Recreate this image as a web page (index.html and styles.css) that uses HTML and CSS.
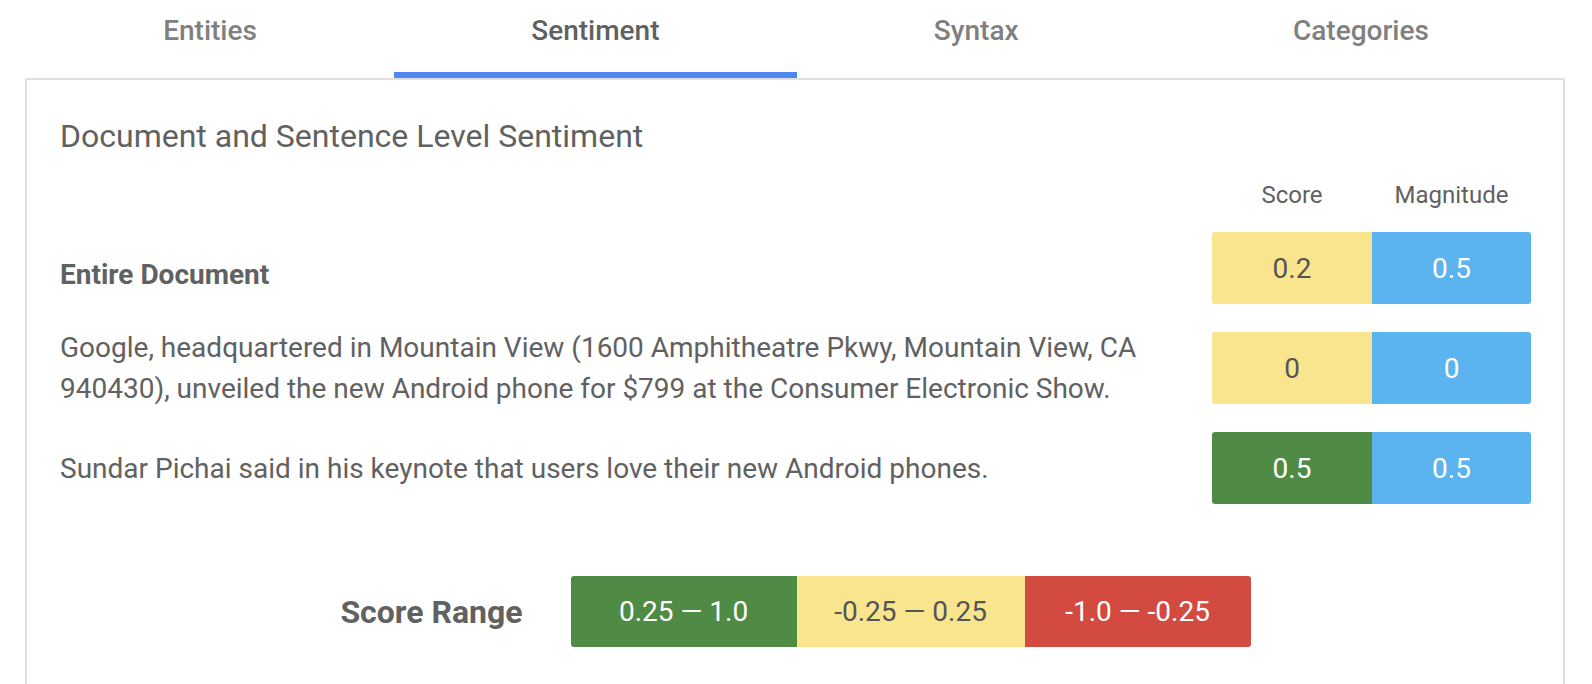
FILE: index.html
```html
<!DOCTYPE html>
<html>
<head>
<meta charset="utf-8">
<link rel="stylesheet" href="styles.css">
</head>
<body>
<div class="page">
  <nav class="tabs">
    <div class="tab">Entities</div>
    <div class="tab active">Sentiment</div>
    <div class="tab">Syntax</div>
    <div class="tab">Categories</div>
  </nav>
  <section class="panel">
    <h2 class="title">Document and Sentence Level Sentiment</h2>
    <div class="grid">
      <div class="head-spacer"></div>
      <div class="head">Score</div>
      <div class="head">Magnitude</div>

      <div class="label strong">Entire Document</div>
      <div class="cell yellow first">0.2</div>
      <div class="cell blue last">0.5</div>

      <div class="label">Google, headquartered in Mountain View (1600 Amphitheatre Pkwy, Mountain View, CA 940430), unveiled the new Android phone for $799 at the Consumer Electronic Show.</div>
      <div class="cell yellow first">0</div>
      <div class="cell blue last">0</div>

      <div class="label">Sundar Pichai said in his keynote that users love their new Android phones.</div>
      <div class="cell green first">0.5</div>
      <div class="cell blue last">0.5</div>
    </div>
    <div class="range">
      <div class="range-label">Score Range</div>
      <div class="range-bar">
        <div class="seg green">0.25 — 1.0</div>
        <div class="seg yellow">-0.25 — 0.25</div>
        <div class="seg red">-1.0 — -0.25</div>
      </div>
    </div>
  </section>
</div>
</body>
</html>
```

FILE: styles.css
```css
* { box-sizing: border-box; }
html, body { margin: 0; padding: 0; background: #fff; }
body {
  font-family: Roboto, "Liberation Sans", sans-serif;
  color: #616161;
  overflow: hidden;
}
.page { width: 1592px; height: 684px; overflow: hidden; }

.tabs {
  display: flex;
  margin: 0 26px 0 26px;
  height: 78px;
}
.tab {
  flex: 1 1 auto;
  text-align: center;
  font-size: 28px;
  font-weight: 500;
  color: #808080;
  padding-top: 15px;
  line-height: 32px;
}
.tab.active {
  color: #616161;
  border-bottom: 6px solid #5087ec;
}

.panel {
  margin: 0 27px 0 25px;
  border: 2px solid #e0e0e0;
  border-bottom: none;
  padding: 37px 32px 0 33px;
  height: 620px;
}
.title {
  margin: 0;
  font-size: 32px;
  font-weight: 400;
  line-height: 38px;
  color: #616161;
}

.grid {
  display: grid;
  grid-template-columns: 1fr 160px 159px;
  grid-template-rows: 23px 72px 72px 72px;
  row-gap: 28px;
  align-items: center;
  margin-top: 26px;
}
.head {
  align-self: start;
  text-align: center;
  font-size: 24px;
  line-height: 28px;
}
.label {
  font-size: 28px;
  line-height: 41px;
  padding-right: 30px;
}
.label.strong { font-weight: 700; padding-top: 12px; }
.cell {
  height: 72px;
  display: flex;
  align-items: center;
  justify-content: center;
  font-size: 28px;
}
.cell.first { border-radius: 3px 0 0 3px; }
.cell.last { border-radius: 0 3px 3px 0; }

.yellow { background: #fae58f; color: #555; }
.blue { background: #5bb3ef; color: #fff; }
.green { background: #4f8b45; color: #fff; }
.red { background: #d34a40; color: #fff; }

.range {
  display: flex;
  justify-content: center;
  align-items: center;
  gap: 48px;
  margin-top: 72px;
}
.range-label {
  font-size: 32px;
  font-weight: 700;
}
.range-bar {
  display: flex;
  border-radius: 3px;
  overflow: hidden;
  height: 71px;
}
.seg {
  display: flex;
  align-items: center;
  justify-content: center;
  font-size: 28px;
}
.seg.green { width: 226px; }
.seg.yellow { width: 228px; }
.seg.red { width: 226px; }
```
